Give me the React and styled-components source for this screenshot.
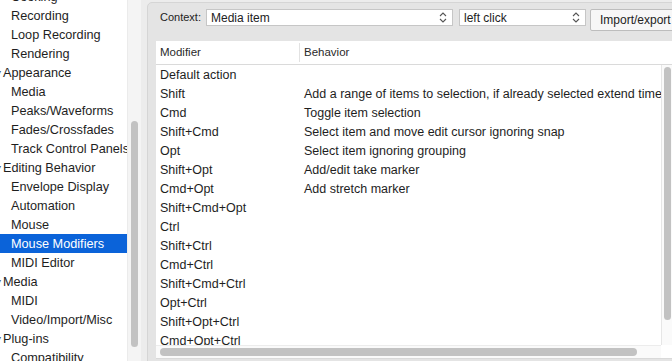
import styled, { createGlobalStyle } from "styled-components";

const GlobalStyle = createGlobalStyle`
  html, body {
    margin: 0;
    padding: 0;
    background: #ececec;
    font-family: "Liberation Sans", Arial, sans-serif;
    color: #1e1e1e;
  }
`;

const navItems = [
  { label: "Cooking", child: true },
  { label: "Recording", child: true },
  { label: "Loop Recording", child: true },
  { label: "Rendering", child: true },
  { label: "Appearance" },
  { label: "Media", child: true },
  { label: "Peaks/Waveforms", child: true },
  { label: "Fades/Crossfades", child: true },
  { label: "Track Control Panels", child: true },
  { label: "Editing Behavior" },
  { label: "Envelope Display", child: true },
  { label: "Automation", child: true },
  { label: "Mouse", child: true },
  { label: "Mouse Modifiers", child: true, selected: true },
  { label: "MIDI Editor", child: true },
  { label: "Media" },
  { label: "MIDI", child: true },
  { label: "Video/Import/Misc", child: true },
  { label: "Plug-ins" },
  { label: "Compatibility", child: true },
];

const rows = [
  ["Default action", ""],
  ["Shift", "Add a range of items to selection, if already selected extend time selection"],
  ["Cmd", "Toggle item selection"],
  ["Shift+Cmd", "Select item and move edit cursor ignoring snap"],
  ["Opt", "Select item ignoring grouping"],
  ["Shift+Opt", "Add/edit take marker"],
  ["Cmd+Opt", "Add stretch marker"],
  ["Shift+Cmd+Opt", ""],
  ["Ctrl", ""],
  ["Shift+Ctrl", ""],
  ["Cmd+Ctrl", ""],
  ["Shift+Cmd+Ctrl", ""],
  ["Opt+Ctrl", ""],
  ["Shift+Opt+Ctrl", ""],
  ["Cmd+Opt+Ctrl", ""],
];

const Window = styled.div`
  display: flex;
  width: 672px;
  height: 361px;
  overflow: hidden;
  background: #ececec;
`;

const Sidebar = styled.div`
  display: flex;
  flex: none;
  height: 100%;
`;

const NavList = styled.div`
  width: 127px;
  height: 100%;
  background: #fff;
  overflow: hidden;
`;

const NavInner = styled.div`
  margin-top: -13px;
`;

const NavRow = styled.div`
  display: flex;
  align-items: center;
  height: 19px;
  padding-left: ${(p) => (p.$child ? "11px" : "3px")};
  font-size: 12.7px;
  white-space: nowrap;
  overflow: hidden;
  background: ${(p) => (p.$selected ? "#0b63d9" : "transparent")};
  color: ${(p) => (p.$selected ? "#fff" : "#1e1e1e")};
`;

const Tri = styled.span`
  width: 6px;
  margin-left: -6px;
  font-size: 8px;
  color: #555;
`;

const ScrollTrack = styled.div`
  position: relative;
  width: 14px;
  height: 100%;
  background: #f4f4f4;
  border-left: 1px solid #ebebeb;
  box-sizing: border-box;
`;

const Thumb = styled.div`
  position: absolute;
  border-radius: 4px;
  background: #c2c2c2;
`;

const Main = styled.div`
  flex: 1;
  min-width: 0;
  overflow: hidden;
  padding: 2px 0 0 6px;
`;

const GroupBox = styled.div`
  width: 560px;
  height: 400px;
  box-sizing: border-box;
  padding: 6px 9px 0 8px;
  background: #e4e4e4;
  border: 1px solid #d5d5d5;
  border-radius: 5px;
`;

const Toolbar = styled.div`
  display: flex;
  align-items: flex-start;
  height: 22px;
  padding-left: 4px;
  margin-bottom: 10px;
`;

const Label = styled.span`
  font-size: 11px;
  line-height: 17px;
  margin-right: 5px;
  color: #222;
`;

const Select = styled.div`
  display: flex;
  align-items: center;
  justify-content: space-between;
  width: ${(p) => p.$w}px;
  height: 17px;
  box-sizing: border-box;
  padding: 0 5px 0 4px;
  margin-right: ${(p) => p.$gap}px;
  background: #fff;
  border: 1px solid #c6c6c6;
  font-size: 12px;
  color: #222;
`;

const Button = styled.div`
  display: flex;
  align-items: center;
  height: 22px;
  box-sizing: border-box;
  padding: 0 9px;
  background: #f7f7f7;
  border: 1px solid #bdbdbd;
  border-radius: 2px;
  font-size: 12px;
  white-space: nowrap;
  color: #222;
`;

const Table = styled.div`
  display: flex;
  flex-direction: column;
  width: 516px;
  height: 317px;
  background: #fff;
  border-bottom: 1px solid #d9d9d9;
`;

const Header = styled.div`
  display: flex;
  align-items: center;
  height: 23px;
  flex: none;
  border-bottom: 1px solid #dadada;
  font-size: 11.5px;
  color: #2a2a2a;
`;

const HeadCell = styled.div`
  width: ${(p) => (p.$w ? `${p.$w}px` : "auto")};
  height: 19px;
  line-height: 19px;
  padding-left: 4px;
  box-sizing: border-box;
  border-right: ${(p) => (p.$w ? "1px solid #e2e2e2" : "none")};
`;

const Body = styled.div`
  display: flex;
  flex: 1;
  min-height: 0;
`;

const Rows = styled.div`
  flex: 1;
  overflow: hidden;
`;

const Row = styled.div`
  display: flex;
  height: 19px;
  align-items: center;
  font-size: 12.5px;
  white-space: nowrap;
`;

const Cell = styled.div`
  width: ${(p) => (p.$w ? `${p.$w}px` : "auto")};
  flex: ${(p) => (p.$w ? "none" : "1")};
  padding-left: 4px;
  box-sizing: border-box;
  overflow: hidden;
`;

const VTrack = styled.div`
  position: relative;
  width: 10px;
  flex: none;
  background: #fafafa;
  border-left: 1px solid #e6e6e6;
`;

const HTrack = styled.div`
  position: relative;
  height: 12px;
  flex: none;
  margin-right: 11px;
  background: #fafafa;
  border-top: 1px solid #ececec;
`;

const Chevrons = () => (
  <svg width="8" height="11" viewBox="0 0 8 11">
    <path d="M1 4 L4 1 L7 4 M1 7 L4 10 L7 7" fill="none" stroke="#555" strokeWidth="1.1" />
  </svg>
);

export default function App() {
  return (
    <>
      <GlobalStyle />
      <Window>
        <Sidebar>
          <NavList>
            <NavInner>
              {navItems.map((n, i) => (
                <NavRow key={i} $child={n.child} $selected={n.selected}>
                  {!n.child && <Tri>▾</Tri>}
                  {n.label}
                </NavRow>
              ))}
            </NavInner>
          </NavList>
          <ScrollTrack>
            <Thumb style={{ left: 3, top: 121, width: 7, height: 226 }} />
          </ScrollTrack>
        </Sidebar>
        <Main>
          <GroupBox>
            <Toolbar>
              <Label>Context:</Label>
              <Select $w={247} $gap={6}>
                Media item
                <Chevrons />
              </Select>
              <Select $w={127} $gap={4}>
                left click
                <Chevrons />
              </Select>
              <Button>Import/export</Button>
            </Toolbar>
            <Table>
              <Header>
                <HeadCell $w={144}>Modifier</HeadCell>
                <HeadCell>Behavior</HeadCell>
              </Header>
              <Body>
                <Rows>
                  {rows.map(([m, b], i) => (
                    <Row key={i}>
                      <Cell $w={144}>{m}</Cell>
                      <Cell>{b}</Cell>
                    </Row>
                  ))}
                </Rows>
                <VTrack>
                  <Thumb style={{ left: 2, top: 2, width: 7, height: 253 }} />
                </VTrack>
              </Body>
              <HTrack>
                <Thumb style={{ left: 4, top: 2, width: 477, height: 8 }} />
              </HTrack>
            </Table>
          </GroupBox>
        </Main>
      </Window>
    </>
  );
}
